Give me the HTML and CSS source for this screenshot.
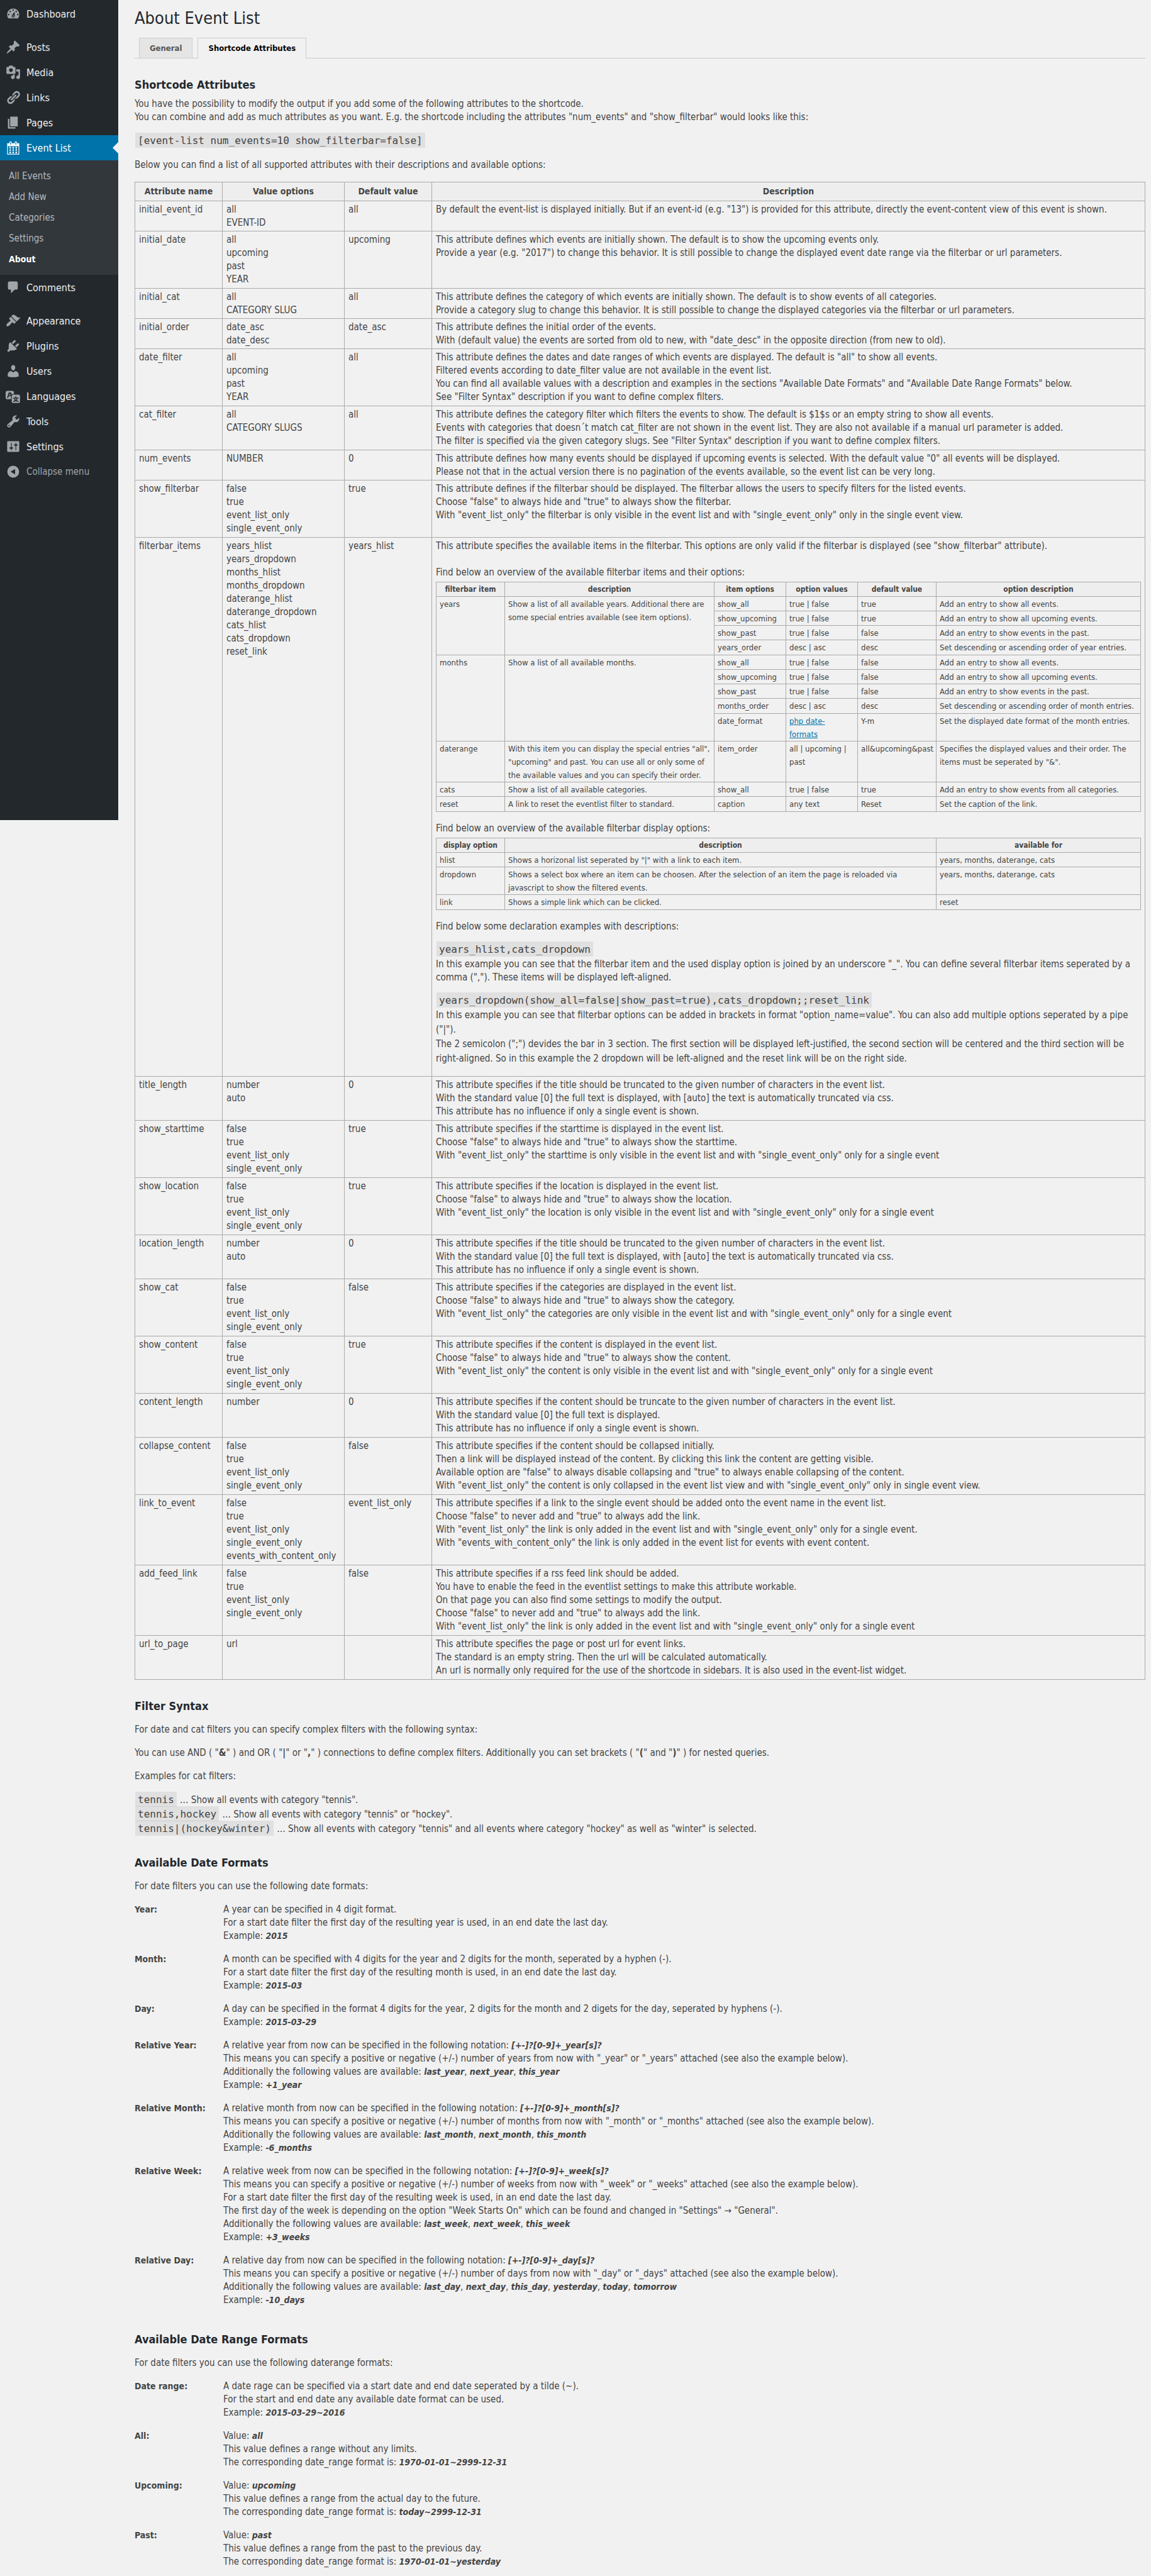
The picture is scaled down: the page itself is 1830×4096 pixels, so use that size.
FILE: index.html
```html
<!DOCTYPE html>
<html lang="en">
<head>
<meta charset="utf-8">
<title>About Event List</title>
<link rel="stylesheet" href="styles.css">
</head>
<body>
<div class="admin">
<nav class="sidebar" aria-label="Main menu">
  <ul class="menu">
    <li><a class="menu-item" href="#"><svg class="icon" viewBox="0 0 20 20"><path d="M3.76 16h12.48c1.1-1.37 1.76-3.11 1.76-5 0-4.42-3.58-8-8-8s-8 3.58-8 8c0 1.89.66 3.63 1.76 5zM10 4c.55 0 1 .45 1 1s-.45 1-1 1-1-.45-1-1 .45-1 1-1zM6 6c.55 0 1 .45 1 1s-.45 1-1 1-1-.45-1-1 .45-1 1-1zm8 0c.55 0 1 .45 1 1s-.45 1-1 1-1-.45-1-1 .45-1 1-1zm-5.37 5.55L12 7v6c0 1.1-.9 2-2 2s-2-.9-2-2c0-.57.24-1.08.63-1.45zM4 10c.55 0 1 .45 1 1s-.45 1-1 1-1-.45-1-1 .45-1 1-1zm12 0c.55 0 1 .45 1 1s-.45 1-1 1-1-.45-1-1 .45-1 1-1zm-5 3c0-.55-.45-1-1-1s-1 .45-1 1 .45 1 1 1 1-.45 1-1z"/></svg>Dashboard</a></li>
    <li class="group-start"><a class="menu-item" href="#"><svg class="icon" viewBox="0 0 20 20"><path d="M10.44 3.02l1.82-1.82 6.36 6.35-1.83 1.82c-1.05-.68-2.48-.57-3.41.36l-.75.75c-.92.93-1.04 2.35-.35 3.41l-1.83 1.82-2.41-2.41-2.8 2.79c-.42.42-3.38 2.71-3.8 2.29s1.86-3.39 2.28-3.81l2.79-2.79L4.1 9.36l1.83-1.82c1.05.69 2.48.57 3.4-.36l.75-.75c.93-.92 1.05-2.35.36-3.41z"/></svg>Posts</a></li>
    <li><a class="menu-item" href="#"><svg class="icon" viewBox="0 0 20 20"><path d="M13 11V4c0-.55-.45-1-1-1h-1.67L9 1H5L3.67 3H2c-.55 0-1 .45-1 1v7c0 .55.45 1 1 1h10c.55 0 1-.45 1-1zM7 4.5c1.38 0 2.5 1.12 2.5 2.5S8.38 9.5 7 9.5 4.5 8.38 4.5 7 5.62 4.5 7 4.5zM14 6h5v10.5c0 1.38-1.12 2.5-2.5 2.5S14 17.88 14 16.5s1.12-2.5 2.5-2.5c.17 0 .34.02.5.05V9h-3V6zm-4 8.05V13h2v3.5c0 1.38-1.12 2.5-2.5 2.5S7 17.88 7 16.5 8.12 14 9.5 14c.17 0 .34.02.5.05z"/></svg>Media</a></li>
    <li><a class="menu-item" href="#"><svg class="icon" viewBox="0 0 20 20"><path d="M17.74 2.76c1.68 1.69 1.68 4.41 0 6.1l-1.53 1.52c-1.12 1.12-2.7 1.47-4.14 1.09l2.62-2.61.76-.77.76-.76c.84-.84.84-2.2 0-3.04-.84-.85-2.2-.85-3.04 0l-.77.76-3.38 3.38c-.37-1.44-.02-3.02 1.1-4.14l1.52-1.53c1.69-1.68 4.42-1.68 6.1 0zM8.59 13.43l5.34-5.34c.42-.42.42-1.1 0-1.52-.44-.43-1.13-.39-1.53 0l-5.33 5.34c-.42.42-.42 1.1 0 1.52.44.43 1.13.39 1.52 0zm-.76 2.29l4.14-4.15c.38 1.44.03 3.02-1.09 4.14l-1.52 1.53c-1.69 1.68-4.41 1.68-6.1 0-1.68-1.68-1.68-4.42 0-6.1l1.53-1.52c1.12-1.12 2.7-1.47 4.14-1.1l-4.14 4.15c-.85.84-.85 2.2 0 3.05.84.84 2.2.84 3.04 0z"/></svg>Links</a></li>
    <li><a class="menu-item" href="#"><svg class="icon" viewBox="0 0 20 20"><path d="M6 15V2h10v13H6zm-1 1h8v2H3V5h2v11z"/></svg>Pages</a></li>
    <li><a class="menu-item current" href="#"><svg class="icon" viewBox="0 0 20 20"><path d="M15 4h3v15H2V4h3V3c0-.41.15-.76.44-1.06.29-.29.65-.44 1.06-.44s.77.15 1.06.44c.29.3.44.65.44 1.06v1h4V3c0-.41.15-.76.44-1.06.29-.29.65-.44 1.06-.44s.77.15 1.06.44c.29.3.44.65.44 1.06v1zM6 3v2.5c0 .14.05.26.15.36.09.09.21.14.35.14s.26-.05.35-.14c.1-.1.15-.22.15-.36V3c0-.14-.05-.26-.15-.35-.09-.1-.21-.15-.35-.15s-.26.05-.35.15c-.1.09-.15.21-.15.35zm7 0v2.5c0 .14.05.26.14.36.1.09.22.14.36.14s.26-.05.36-.14c.09-.1.14-.22.14-.36V3c0-.14-.05-.26-.14-.35-.1-.1-.22-.15-.36-.15s-.26.05-.36.15c-.09.09-.14.21-.14.35zm4 15V8H3v10h14zM7 9v2H5V9h2zm2 0h2v2H9V9zm4 2V9h2v2h-2zm-6 1v2H5v-2h2zm2 0h2v2H9v-2zm4 2v-2h2v2h-2zm-6 1v2H5v-2h2zm4 2H9v-2h2v2zm4 0h-2v-2h2v2z"/></svg>Event List</a>
      <ul class="submenu">
        <li><a href="#">All Events</a></li>
        <li><a href="#">Add New</a></li>
        <li><a href="#">Categories</a></li>
        <li><a href="#">Settings</a></li>
        <li><a class="current" href="#">About</a></li>
      </ul>
    </li>
    <li><a class="menu-item" href="#"><svg class="icon" viewBox="0 0 20 20"><path d="M5 2h9c1.1 0 2 .9 2 2v7c0 1.1-.9 2-2 2h-2l-5 5v-5H5c-1.1 0-2-.9-2-2V4c0-1.1.9-2 2-2z"/></svg>Comments</a></li>
    <li class="group-start"><a class="menu-item" href="#"><svg class="icon" viewBox="0 0 20 20"><path d="M14.48 11.06L7.41 3.99l1.5-1.5c.5-.56 2.3-.47 3.51.32 1.21.8 1.43 1.28 2.91 2.1 1.18.64 2.45 1.26 4.45.85zm-.71.71L6.7 4.7 4.93 6.47c-.39.39-.39 1.02 0 1.41l1.06 1.06c.39.39.39 1.03 0 1.42-.6.6-1.43 1.11-2.21 1.69-.35.26-.7.53-1.01.84C1.43 14.23.4 16.08 1.4 17.07c.99 1 2.84-.03 4.18-1.36.31-.31.58-.66.85-1.02.57-.78 1.08-1.61 1.69-2.21.39-.39 1.02-.39 1.41 0l1.06 1.06c.39.39 1.02.39 1.41 0z"/></svg>Appearance</a></li>
    <li><a class="menu-item" href="#"><svg class="icon" viewBox="0 0 20 20"><path d="M13.11 4.36L9.87 7.6 8 5.73l3.24-3.24c.35-.34 1.05-.2 1.56.32.52.51.66 1.21.31 1.55zm-8 1.77l.91-1.12 9.01 9.01-1.19.84c-.71.71-2.63 1.16-3.82 1.16H6.14L4.9 17.26c-.59.59-1.54.59-2.12 0-.59-.58-.59-1.53 0-2.12l1.24-1.24v-3.88c0-1.13.4-3.19 1.09-3.89zm7.26 3.97l3.24-3.24c.34-.35 1.04-.21 1.55.31.52.51.66 1.21.31 1.55l-3.24 3.25z"/></svg>Plugins</a></li>
    <li><a class="menu-item" href="#"><svg class="icon" viewBox="0 0 20 20"><path d="M10 9.25c-2.27 0-2.73-3.44-2.73-3.44C7 4.02 7.82 2 9.97 2c2.16 0 2.98 2.02 2.71 3.81 0 0-.41 3.44-2.68 3.44zm0 2.57L12.72 10c2.39 0 4.52 2.33 4.52 4.53v2.49s-3.65 1.13-7.24 1.13c-3.65 0-7.24-1.13-7.24-1.13v-2.49c0-2.25 1.94-4.48 4.47-4.48z"/></svg>Users</a></li>
    <li><a class="menu-item" href="#"><svg class="icon" viewBox="0 0 20 20"><path d="M11 7H9.49c-.63 0-1.25.3-1.59.7L7 5H4.13l-2.39 7h1.69l.74-2H7v4H2c-1.1 0-2-.9-2-2V5c0-1.1.9-2 2-2h7c1.1 0 2 .9 2 2v2zM6.51 9H4.49l1-2.93zM10 8h7c1.1 0 2 .9 2 2v7c0 1.1-.9 2-2 2h-7c-1.1 0-2-.9-2-2v-7c0-1.1.9-2 2-2zm7.25 5v-1.08h-3.17V9.75h-1.16v2.17H9.75V13h1.28c.11.85.56 1.85 1.28 2.62-.87.36-1.89.62-2.31.62-.01.02.22.97.2 1.46.84 0 2.21-.5 3.28-1.15 1.09.65 2.48 1.15 3.34 1.15-.02-.49.2-1.44.2-1.46-.43 0-1.49-.27-2.38-.63.7-.77 1.14-1.77 1.25-2.61h1.36zm-3.81 1.93c-.5-.46-.85-1.13-1.01-1.93h2.09c-.17.8-.51 1.47-1 1.93l-.04.03s-.03-.02-.04-.03z"/></svg>Languages</a></li>
    <li><a class="menu-item" href="#"><svg class="icon" viewBox="0 0 20 20"><path d="M16.68 9.77c-1.34 1.34-3.3 1.67-4.95.99l-5.41 6.52c-.99.99-2.59.99-3.58 0s-.99-2.59 0-3.57l6.52-5.42c-.68-1.65-.35-3.61.99-4.95 1.28-1.28 3.12-1.62 4.72-1.06l-2.89 2.89 2.82 2.82 2.86-2.87c.53 1.58.18 3.39-1.08 4.65zM3.81 16.21c.4.39 1.04.39 1.43 0 .4-.4.4-1.04 0-1.43-.39-.4-1.03-.4-1.43 0-.39.39-.39 1.03 0 1.43z"/></svg>Tools</a></li>
    <li><a class="menu-item" href="#"><svg class="icon" viewBox="0 0 20 20"><path d="M18 16V4c0-.55-.45-1-1-1H3c-.55 0-1 .45-1 1v12c0 .55.45 1 1 1h14c.55 0 1-.45 1-1zM8 11h1c.55 0 1 .45 1 1s-.45 1-1 1H8v1.5c0 .28-.22.5-.5.5s-.5-.22-.5-.5V13H6c-.55 0-1-.45-1-1s.45-1 1-1h1V5.5c0-.28.22-.5.5-.5s.5.22.5.5V11zm5-2h-1c-.55 0-1-.45-1-1s.45-1 1-1h1V5.5c0-.28.22-.5.5-.5s.5.22.5.5V7h1c.55 0 1 .45 1 1s-.45 1-1 1h-1v5.5c0 .28-.22.5-.5.5s-.5-.22-.5-.5V9z"/></svg>Settings</a></li>
    <li><button class="menu-item collapse" type="button"><svg class="icon" viewBox="0 0 20 20"><path d="M10 2.160a7.840 7.840 0 1 0 0 15.680a7.840 7.840 0 1 0 0-15.680zM12.500 13.500L6.500 10l6-3.500z"/></svg>Collapse menu</button></li>
  </ul>
</nav>

<main class="content">
<h1>About Event List</h1>
<nav class="tabs" aria-label="About pages">
  <a class="tab" href="#">General</a>
  <a class="tab active" href="#">Shortcode Attributes</a>
</nav>

<h2>Shortcode Attributes</h2>
<p class="intro">You have the possibility to modify the output if you add some of the following attributes to the shortcode.<br>
You can combine and add as much attributes as you want. E.g. the shortcode including the attributes "num_events" and "show_filterbar" would looks like this:</p>
<p class="code-lines"><code>[event-list num_events=10 show_filterbar=false]</code></p>
<p>Below you can find a list of all supported attributes with their descriptions and available options:</p>

<table class="attributes">
<colgroup><col class="col-name"><col class="col-values"><col class="col-default"><col></colgroup>
<thead><tr><th>Attribute name</th><th>Value options</th><th>Default value</th><th>Description</th></tr></thead>
<tbody>
<tr class="lines-2"><td>initial_event_id</td><td>all<br>EVENT-ID</td><td>all</td><td>By default the event-list is displayed initially. But if an event-id (e.g. "13") is provided for this attribute, directly the event-content view of this event is shown.</td></tr>
<tr class="lines-4"><td>initial_date</td><td>all<br>upcoming<br>past<br>YEAR</td><td>upcoming</td><td>This attribute defines which events are initially shown. The default is to show the upcoming events only.<br>Provide a year (e.g. "2017") to change this behavior. It is still possible to change the displayed event date range via the filterbar or url parameters.</td></tr>
<tr class="lines-2"><td>initial_cat</td><td>all<br>CATEGORY SLUG</td><td>all</td><td>This attribute defines the category of which events are initially shown. The default is to show events of all categories.<br>Provide a category slug to change this behavior. It is still possible to change the displayed categories via the filterbar or url parameters.</td></tr>
<tr class="lines-2"><td>initial_order</td><td>date_asc<br>date_desc</td><td>date_asc</td><td>This attribute defines the initial order of the events.<br>With (default value) the events are sorted from old to new, with "date_desc" in the opposite direction (from new to old).</td></tr>
<tr class="lines-4"><td>date_filter</td><td>all<br>upcoming<br>past<br>YEAR</td><td>all</td><td>This attribute defines the dates and date ranges of which events are displayed. The default is "all" to show all events.<br>Filtered events according to date_filter value are not available in the event list.<br>You can find all available values with a description and examples in the sections "Available Date Formats" and "Available Date Range Formats" below.<br>See "Filter Syntax" description if you want to define complex filters.</td></tr>
<tr class="lines-3"><td>cat_filter</td><td>all<br>CATEGORY SLUGS</td><td>all</td><td>This attribute defines the category filter which filters the events to show. The default is $1$s or an empty string to show all events.<br>Events with categories that doesn´t match cat_filter are not shown in the event list. They are also not available if a manual url parameter is added.<br>The filter is specified via the given category slugs. See "Filter Syntax" description if you want to define complex filters.</td></tr>
<tr class="lines-2"><td>num_events</td><td>NUMBER</td><td>0</td><td>This attribute defines how many events should be displayed if upcoming events is selected. With the default value "0" all events will be displayed.<br>Please not that in the actual version there is no pagination of the events available, so the event list can be very long.</td></tr>
<tr class="lines-4"><td>show_filterbar</td><td>false<br>true<br>event_list_only<br>single_event_only</td><td>true</td><td>This attribute defines if the filterbar should be displayed. The filterbar allows the users to specify filters for the listed events.<br>Choose "false" to always hide and "true" to always show the filterbar.<br>With "event_list_only" the filterbar is only visible in the event list and with "single_event_only" only in the single event view.</td></tr>
<tr><td>filterbar_items</td><td>years_hlist<br>years_dropdown<br>months_hlist<br>months_dropdown<br>daterange_hlist<br>daterange_dropdown<br>cats_hlist<br>cats_dropdown<br>reset_link</td><td>years_hlist</td>
<td class="details">
<p>This attribute specifies the available items in the filterbar. This options are only valid if the filterbar is displayed (see "show_filterbar" attribute).<br><br>Find below an overview of the available filterbar items and their options:</p>
<table class="options">
<colgroup><col class="col-item"><col><col class="col-option"><col class="col-option"><col class="col-preset"><col class="col-note"></colgroup>
<thead><tr><th>filterbar item</th><th>description</th><th>item options</th><th>option values</th><th>default value</th><th>option description</th></tr></thead>
<tbody>
<tr><td rowspan="4">years</td><td rowspan="4">Show a list of all available years. Additional there are some special entries available (see item options).</td><td>show_all</td><td>true | false</td><td>true</td><td>Add an entry to show all events.</td></tr>
<tr><td>show_upcoming</td><td>true | false</td><td>true</td><td>Add an entry to show all upcoming events.</td></tr>
<tr><td>show_past</td><td>true | false</td><td>false</td><td>Add an entry to show events in the past.</td></tr>
<tr class="group-end"><td>years_order</td><td>desc | asc</td><td>desc</td><td>Set descending or ascending order of year entries.</td></tr>
<tr><td rowspan="5">months</td><td rowspan="5">Show a list of all available months.</td><td>show_all</td><td>true | false</td><td>false</td><td>Add an entry to show all events.</td></tr>
<tr><td>show_upcoming</td><td>true | false</td><td>false</td><td>Add an entry to show all upcoming events.</td></tr>
<tr><td>show_past</td><td>true | false</td><td>false</td><td>Add an entry to show events in the past.</td></tr>
<tr class="group-end"><td>months_order</td><td>desc | asc</td><td>desc</td><td>Set descending or ascending order of month entries.</td></tr>
<tr><td>date_format</td><td><a href="#">php date-<br>formats</a></td><td>Y-m</td><td>Set the displayed date format of the month entries.</td></tr>
<tr><td>daterange</td><td>With this item you can display the special entries "all", "upcoming" and past. You can use all or only some of the available values and you can specify their order.</td><td>item_order</td><td>all | upcoming | past</td><td>all&amp;upcoming&amp;past</td><td>Specifies the displayed values and their order. The items must be seperated by "&amp;".</td></tr>
<tr><td>cats</td><td>Show a list of all available categories.</td><td>show_all</td><td>true | false</td><td>true</td><td>Add an entry to show events from all categories.</td></tr>
<tr class="group-end"><td>reset</td><td>A link to reset the eventlist filter to standard.</td><td>caption</td><td>any text</td><td>Reset</td><td>Set the caption of the link.</td></tr>
</tbody>
</table>
<p>Find below an overview of the available filterbar display options:</p>
<table class="options">
<colgroup><col class="col-item"><col><col class="col-note"></colgroup>
<thead><tr><th>display option</th><th>description</th><th>available for</th></tr></thead>
<tbody>
<tr><td>hlist</td><td>Shows a horizonal list seperated by "|" with a link to each item.</td><td>years, months, daterange, cats</td></tr>
<tr><td>dropdown</td><td>Shows a select box where an item can be choosen. After the selection of an item the page is reloaded via javascript to show the filtered events.</td><td>years, months, daterange, cats</td></tr>
<tr class="group-end"><td>link</td><td>Shows a simple link which can be clicked.</td><td>reset</td></tr>
</tbody>
</table>
<p>Find below some declaration examples with descriptions:</p>
<p class="code-lines"><code>years_hlist,cats_dropdown</code></p>
<p class="explain">In this example you can see that the filterbar item and the used display option is joined by an underscore "_". You can define several filterbar items seperated by a comma (","). These items will be displayed left-aligned.</p>
<p class="code-lines"><code>years_dropdown(show_all=false|show_past=true),cats_dropdown;;reset_link</code><br>
In this example you can see that filterbar options can be added in brackets in format "option_name=value". You can also add multiple options seperated by a pipe ("|").<br>
The 2 semicolon (";") devides the bar in 3 section. The first section will be displayed left-justified, the second section will be centered and the third section will be right-aligned. So in this example the 2 dropdown will be left-aligned and the reset link will be on the right side.</p>
</td></tr>
<tr class="lines-3"><td>title_length</td><td>number<br>auto</td><td>0</td><td>This attribute specifies if the title should be truncated to the given number of characters in the event list.<br>With the standard value [0] the full text is displayed, with [auto] the text is automatically truncated via css.<br>This attribute has no influence if only a single event is shown.</td></tr>
<tr class="lines-4"><td>show_starttime</td><td>false<br>true<br>event_list_only<br>single_event_only</td><td>true</td><td>This attribute specifies if the starttime is displayed in the event list.<br>Choose "false" to always hide and "true" to always show the starttime.<br>With "event_list_only" the starttime is only visible in the event list and with "single_event_only" only for a single event</td></tr>
<tr class="lines-4"><td>show_location</td><td>false<br>true<br>event_list_only<br>single_event_only</td><td>true</td><td>This attribute specifies if the location is displayed in the event list.<br>Choose "false" to always hide and "true" to always show the location.<br>With "event_list_only" the location is only visible in the event list and with "single_event_only" only for a single event</td></tr>
<tr class="lines-3"><td>location_length</td><td>number<br>auto</td><td>0</td><td>This attribute specifies if the title should be truncated to the given number of characters in the event list.<br>With the standard value [0] the full text is displayed, with [auto] the text is automatically truncated via css.<br>This attribute has no influence if only a single event is shown.</td></tr>
<tr class="lines-4"><td>show_cat</td><td>false<br>true<br>event_list_only<br>single_event_only</td><td>false</td><td>This attribute specifies if the categories are displayed in the event list.<br>Choose "false" to always hide and "true" to always show the category.<br>With "event_list_only" the categories are only visible in the event list and with "single_event_only" only for a single event</td></tr>
<tr class="lines-4"><td>show_content</td><td>false<br>true<br>event_list_only<br>single_event_only</td><td>true</td><td>This attribute specifies if the content is displayed in the event list.<br>Choose "false" to always hide and "true" to always show the content.<br>With "event_list_only" the content is only visible in the event list and with "single_event_only" only for a single event</td></tr>
<tr class="lines-3"><td>content_length</td><td>number</td><td>0</td><td>This attribute specifies if the content should be truncate to the given number of characters in the event list.<br>With the standard value [0] the full text is displayed.<br>This attribute has no influence if only a single event is shown.</td></tr>
<tr class="lines-4"><td>collapse_content</td><td>false<br>true<br>event_list_only<br>single_event_only</td><td>false</td><td>This attribute specifies if the content should be collapsed initially.<br>Then a link will be displayed instead of the content. By clicking this link the content are getting visible.<br>Available option are "false" to always disable collapsing and "true" to always enable collapsing of the content.<br>With "event_list_only" the content is only collapsed in the event list view and with "single_event_only" only in single event view.</td></tr>
<tr class="lines-5"><td>link_to_event</td><td>false<br>true<br>event_list_only<br>single_event_only<br>events_with_content_only</td><td>event_list_only</td><td>This attribute specifies if a link to the single event should be added onto the event name in the event list.<br>Choose "false" to never add and "true" to always add the link.<br>With "event_list_only" the link is only added in the event list and with "single_event_only" only for a single event.<br>With "events_with_content_only" the link is only added in the event list for events with event content.</td></tr>
<tr class="lines-5"><td>add_feed_link</td><td>false<br>true<br>event_list_only<br>single_event_only</td><td>false</td><td>This attribute specifies if a rss feed link should be added.<br>You have to enable the feed in the eventlist settings to make this attribute workable.<br>On that page you can also find some settings to modify the output.<br>Choose "false" to never add and "true" to always add the link.<br>With "event_list_only" the link is only added in the event list and with "single_event_only" only for a single event</td></tr>
<tr class="lines-3"><td>url_to_page</td><td>url</td><td></td><td>This attribute specifies the page or post url for event links.<br>The standard is an empty string. Then the url will be calculated automatically.<br>An url is normally only required for the use of the shortcode in sidebars. It is also used in the event-list widget.</td></tr>
</tbody>
</table>

<h2>Filter Syntax</h2>
<p>For date and cat filters you can specify complex filters with the following syntax:</p>
<p>You can use AND ( "<strong>&amp;</strong>" ) and OR ( "<strong>|</strong>" or "<strong>,</strong>" ) connections to define complex filters. Additionally you can set brackets ( "<strong>(</strong>" and "<strong>)</strong>" ) for nested queries.</p>
<p>Examples for cat filters:</p>
<p class="code-lines"><code>tennis</code> … Show all events with category "tennis".<br>
<code>tennis,hockey</code> … Show all events with category "tennis" or "hockey".<br>
<code>tennis|(hockey&amp;winter)</code> … Show all events with category "tennis" and all events where category "hockey" as well as "winter" is selected.</p>

<h2>Available Date Formats</h2>
<p>For date filters you can use the following date formats:</p>
<dl class="formats">
<dt>Year:</dt><dd>A year can be specified in 4 digit format.<br>For a start date filter the first day of the resulting year is used, in an end date the last day.<br>Example: <em>2015</em></dd>
<dt>Month:</dt><dd>A month can be specified with 4 digits for the year and 2 digits for the month, seperated by a hyphen (-).<br>For a start date filter the first day of the resulting month is used, in an end date the last day.<br>Example: <em>2015-03</em></dd>
<dt>Day:</dt><dd>A day can be specified in the format 4 digits for the year, 2 digits for the month and 2 digets for the day, seperated by hyphens (-).<br>Example: <em>2015-03-29</em></dd>
<dt>Relative Year:</dt><dd>A relative year from now can be specified in the following notation: <em>[+-]?[0-9]+_year[s]?</em><br>This means you can specify a positive or negative (+/-) number of years from now with "_year" or "_years" attached (see also the example below).<br>Additionally the following values are available: <em>last_year</em>, <em>next_year</em>, <em>this_year</em><br>Example: <em>+1_year</em></dd>
<dt>Relative Month:</dt><dd>A relative month from now can be specified in the following notation: <em>[+-]?[0-9]+_month[s]?</em><br>This means you can specify a positive or negative (+/-) number of months from now with "_month" or "_months" attached (see also the example below).<br>Additionally the following values are available: <em>last_month</em>, <em>next_month</em>, <em>this_month</em><br>Example: <em>-6_months</em></dd>
<dt>Relative Week:</dt><dd>A relative week from now can be specified in the following notation: <em>[+-]?[0-9]+_week[s]?</em><br>This means you can specify a positive or negative (+/-) number of weeks from now with "_week" or "_weeks" attached (see also the example below).<br>For a start date filter the first day of the resulting week is used, in an end date the last day.<br>The first day of the week is depending on the option "Week Starts On" which can be found and changed in "Settings" → "General".<br>Additionally the following values are available: <em>last_week</em>, <em>next_week</em>, <em>this_week</em><br>Example: <em>+3_weeks</em></dd>
<dt>Relative Day:</dt><dd>A relative day from now can be specified in the following notation: <em>[+-]?[0-9]+_day[s]?</em><br>This means you can specify a positive or negative (+/-) number of days from now with "_day" or "_days" attached (see also the example below).<br>Additionally the following values are available: <em>last_day</em>, <em>next_day</em>, <em>this_day</em>, <em>yesterday</em>, <em>today</em>, <em>tomorrow</em><br>Example: <em>-10_days</em></dd>
</dl>

<h2>Available Date Range Formats</h2>
<p>For date filters you can use the following daterange formats:</p>
<dl class="formats">
<dt>Date range:</dt><dd>A date rage can be specified via a start date and end date seperated by a tilde (~).<br>For the start and end date any available date format can be used.<br>Example: <em>2015-03-29~2016</em></dd>
<dt>All:</dt><dd>Value: <em>all</em><br>This value defines a range without any limits.<br>The corresponding date_range format is: <em>1970-01-01~2999-12-31</em></dd>
<dt>Upcoming:</dt><dd>Value: <em>upcoming</em><br>This value defines a range from the actual day to the future.<br>The corresponding date_range format is: <em>today~2999-12-31</em></dd>
<dt>Past:</dt><dd>Value: <em>past</em><br>This value defines a range from the past to the previous day.<br>The corresponding date_range format is: <em>1970-01-01~yesterday</em></dd>
</dl>
</main>
</div>
</body>
</html>
```
FILE: styles.css
```css
* { box-sizing: border-box; }

body {
  margin: 0;
  background: #f1f1f1;
  color: #444;
  font: 15px/21px "DejaVu Sans Condensed", "Noto Sans", sans-serif;
}

.admin { display: flex; align-items: flex-start; }

/* Sidebar */
.sidebar {
  flex: 0 0 188px;
  min-height: 1304px;
  padding-top: 2px;
  background: #23282d;
}
.menu, .submenu { list-style: none; margin: 0; padding: 0; }
.group-start { margin-top: 13px; }
.menu-item {
  display: flex;
  align-items: center;
  gap: 9px;
  width: 100%;
  height: 40px;
  padding: 0 9px;
  color: #eee;
  font-size: 16px;
  text-decoration: none;
}
.icon { width: 24px; height: 24px; fill: #a0a5aa; }
.menu-item.current { position: relative; background: #0073aa; color: #fff; }
.menu-item.current .icon { fill: #fff; }
.menu-item.current::after {
  content: "";
  position: absolute;
  right: 0;
  top: 11px;
  border: 9px solid transparent;
  border-left-width: 0;
  border-right-color: #f1f1f1;
}
.submenu { padding: 9px 0 8px; background: #32373c; }
.submenu a {
  display: block;
  padding: 6px 14px;
  color: #b4b9be;
  text-decoration: none;
}
.submenu .current { color: #fff; font-size: 14px; font-weight: bold; }
.collapse {
  border: 0;
  background: none;
  color: #a0a5aa;
  font-family: inherit;
  font-size: 15px;
}

/* Page header */
.content { flex: 1; min-width: 0; padding: 12px 9px 13px 26px; }
h1 { margin: 0 0 15px; color: #23282d; font-size: 27px; font-weight: normal; line-height: 33px; }
.tabs {
  display: flex;
  gap: 8px;
  padding-left: 7px;
  border-bottom: 1px solid #ccc;
}
.tab {
  margin-bottom: -1px;
  padding: 5px 16px;
  border: 1px solid #ccc;
  background: #e5e5e5;
  color: #555;
  font-size: 13px;
  font-weight: bold;
  text-decoration: none;
}
.tab.active { border-bottom-color: #f1f1f1; background: #f1f1f1; color: #000; }

/* Text */
h2 { margin: 30px 0 15px; color: #23282d; font-size: 18px; line-height: 23px; }
p { margin: 16px 0; }
.intro { margin-top: -6px; }
.code-lines { line-height: 23px; }
code {
  margin: 0 1px;
  padding: 3px 4px 2px;
  background: rgba(0, 0, 0, 0.07);
  font: 16px "DejaVu Sans Mono", monospace;
}
a { color: #0073aa; }

/* Tables */
table { width: 100%; border-collapse: collapse; table-layout: fixed; }
th, td { border: 1px solid #aaa; }
th { background: #eee; text-align: center; }
td { text-align: left; vertical-align: top; }
.attributes > thead th { height: 30px; padding: 0; font-size: 14px; }
.attributes > tbody > tr > td { padding: 3px 6px 0; }
.attributes > tbody > tr > .details { padding-bottom: 16px; }
.col-name, .col-default { width: 139px; }
.col-values { width: 194px; }
.lines-2 { height: 48px; }
.lines-3 { height: 70px; }
.lines-4 { height: 91px; }
.lines-5 { height: 112px; }

.details p:first-child { margin-top: 0; margin-bottom: 4px; }
.details table + p { margin-bottom: 4px; }
.details p + .code-lines { margin: 15px 0 0; }
.details .explain { margin: 1px 0 0; }
.options { font-size: 13px; }
.options th { height: 23px; padding: 0; font-size: 12px; }
.options td { padding: 1px 1px 0 5px; }
.options .group-end { height: 24px; }
.col-item { width: 109px; }
.col-option { width: 114px; }
.col-preset { width: 125px; }
.col-note { width: 325px; }

/* Format lists */
.formats {
  display: grid;
  grid-template-columns: 141px 1fr;
  row-gap: 16px;
  margin: 16px 0 40px;
}
.formats:last-child { margin-bottom: 0; }
.formats dt { font-size: 14px; font-weight: bold; }
.formats dd { margin: 0; }
.formats em { font-size: 14px; font-weight: bold; }
```
